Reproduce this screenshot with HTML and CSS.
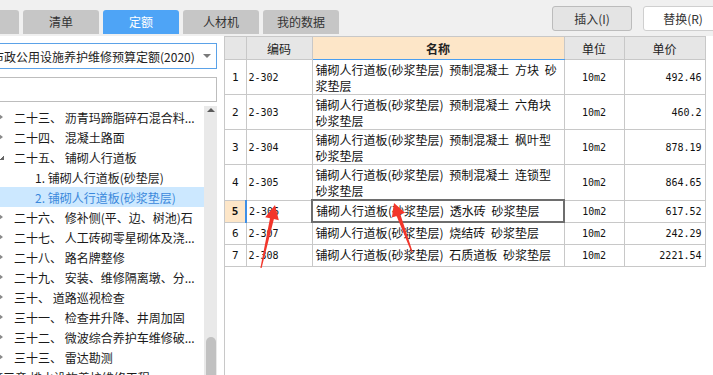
FILE: index.html
```html
<!DOCTYPE html>
<html>
<head>
    <meta charset="utf-8">
    <title>定额</title>
    <link rel="stylesheet" href="styles.css">
</head>
<body>
<div class="topbar">
    <div class="tabs">
        <div class="tab">工程</div>
        <div class="tab">清单</div>
        <div class="tab active">定额</div>
        <div class="tab">人材机</div>
        <div class="tab">我的数据</div>
    </div>
    <div class="actions">
        <button class="btn">插入(I)</button>
        <button class="btn btn-white">替换(R)</button>
    </div>
</div>
<div class="main">
    <div class="left">
        <div class="lib-select">
            <span>市政公用设施养护维修预算定额(2020)</span>
            <span class="caret"></span>
        </div>
        <div class="search"></div>
        <div class="tree-wrap">
            <ul class="tree">
                <li class="node"><span class="tw"></span>二十三、 沥青玛蹄脂碎石混合料...</li>
                <li class="node"><span class="tw"></span>二十四、 混凝土路面</li>
                <li class="node"><span class="tw open"></span>二十五、 铺砌人行道板</li>
                <li class="node child">1. 铺砌人行道板(砂垫层)</li>
                <li class="node child sel">2. 铺砌人行道板(砂浆垫层)</li>
                <li class="node"><span class="tw"></span>二十六、 修补侧(平、边、树池)石</li>
                <li class="node"><span class="tw"></span>二十七、 人工砖砌零星砌体及浇...</li>
                <li class="node"><span class="tw"></span>二十八、 路名牌整修</li>
                <li class="node"><span class="tw"></span>二十九、 安装、维修隔离墩、分...</li>
                <li class="node"><span class="tw"></span>三十、 道路巡视检查</li>
                <li class="node"><span class="tw"></span>三十一、 检查井升降、井周加固</li>
                <li class="node"><span class="tw"></span>三十二、 微波综合养护车维修破...</li>
                <li class="node"><span class="tw"></span>三十三、 雷达勘测</li>
                <li class="node chapter">第三章 排水设施养护维修工程</li>
            </ul>
            <div class="vscroll">
                <span class="up"></span>
                <span class="thumb"></span>
            </div>
        </div>
    </div>
    <div class="right">
        <table class="grid">
            <colgroup>
                <col class="c-rn">
                <col class="c-code">
                <col class="c-name">
                <col class="c-unit">
                <col class="c-price">
            </colgroup>
            <thead>
            <tr>
                <th class="rn"></th>
                <th>编码</th>
                <th class="name-h">名称</th>
                <th>单位</th>
                <th>单价</th>
            </tr>
            </thead>
            <tbody>
            <tr class="tall">
                <td class="rn">1</td>
                <td class="code">2-302</td>
                <td class="name"><div>铺砌人行道板(砂浆垫层) 预制混凝土 方块 砂浆垫层</div></td>
                <td class="unit">10m2</td>
                <td class="price">492.46</td>
            </tr>
            <tr class="tall">
                <td class="rn">2</td>
                <td class="code">2-303</td>
                <td class="name"><div>铺砌人行道板(砂浆垫层) 预制混凝土 六角块 砂浆垫层</div></td>
                <td class="unit">10m2</td>
                <td class="price">460.2</td>
            </tr>
            <tr class="tall">
                <td class="rn">3</td>
                <td class="code">2-304</td>
                <td class="name"><div>铺砌人行道板(砂浆垫层) 预制混凝土 枫叶型 砂浆垫层</div></td>
                <td class="unit">10m2</td>
                <td class="price">878.19</td>
            </tr>
            <tr class="tall">
                <td class="rn">4</td>
                <td class="code">2-305</td>
                <td class="name"><div>铺砌人行道板(砂浆垫层) 预制混凝土 连锁型 砂浆垫层</div></td>
                <td class="unit">10m2</td>
                <td class="price">864.65</td>
            </tr>
            <tr class="short cur">
                <td class="rn">5</td>
                <td class="code">2-306</td>
                <td class="name"><div>铺砌人行道板(砂浆垫层) 透水砖 砂浆垫层</div></td>
                <td class="unit">10m2</td>
                <td class="price">617.52</td>
            </tr>
            <tr class="short">
                <td class="rn">6</td>
                <td class="code">2-307</td>
                <td class="name"><div>铺砌人行道板(砂浆垫层) 烧结砖 砂浆垫层</div></td>
                <td class="unit">10m2</td>
                <td class="price">242.29</td>
            </tr>
            <tr class="short">
                <td class="rn">7</td>
                <td class="code">2-308</td>
                <td class="name"><div>铺砌人行道板(砂浆垫层) 石质道板 砂浆垫层</div></td>
                <td class="unit">10m2</td>
                <td class="price">2221.54</td>
            </tr>
            </tbody>
        </table>
    </div>
</div>

<!-- red marker arrows drawn on top of the screenshot -->
<svg class="marks" width="713" height="375" viewBox="0 0 713 375">
    <polygon points="275,205 278.8,220.2 273.9,219.1 261.6,268.1 260.4,267.9 270,218.3 265.2,217.2"/>
    <polygon points="394,203 405.1,212.8 400.4,214.5 412.6,251.8 411.4,252.2 396.6,215.9 391.9,217.6"/>
</svg>
</body>
</html>
```

FILE: styles.css
```css
* {
    box-sizing: border-box;
}

html, body {
    margin: 0;
    height: 375px;
    overflow: hidden;
}

body {
    position: relative;
    font-family: "Noto Sans CJK SC", "Noto Sans", sans-serif;
    font-size: 12px;
    color: #1a1a1a;
    background-color: #f0f0f0;
}

/* top tabs and buttons */
.topbar {
    display: flex;
    justify-content: space-between;
    height: 36px;
}

.tabs {
    display: flex;
    gap: 4px;
    margin-left: -57px;
    padding-top: 10px;
}

.tab {
    width: 76px;
    height: 24px;
    line-height: 24px;
    text-align: center;
    background-color: #c6c6c6;
    color: #333;
    border-radius: 3px 3px 0 0;
}

.tab.active {
    background-color: #4ea4f6;
    color: #fff;
}

.actions {
    display: flex;
    align-items: flex-start;
    gap: 11px;
    margin-top: 6px;
    margin-right: -10px;
}

.btn {
    width: 80px;
    height: 25px;
    padding: 0;
    font: inherit;
    color: #333;
    background-color: #e4e4e4;
    border: 1px solid #bcbcbc;
    border-radius: 3px;
}

.btn-white {
    background-color: #fff;
    border-color: #cfcfcf;
}

/* panels */
.main {
    display: flex;
    height: 339px;
}

.left {
    width: 224px;
    flex: none;
    display: flex;
    flex-direction: column;
    padding: 7px 7px 0 0;
    background-color: #fff;
    overflow: hidden;
}

.lib-select {
    display: flex;
    align-items: center;
    justify-content: space-between;
    height: 26px;
    margin-left: -20px;
    padding: 0 5px 0 11px;
    border: 1px solid #5ba2e8;
    white-space: nowrap;
    color: #222;
}

.caret {
    border-left: 4px solid transparent;
    border-right: 4px solid transparent;
    border-top: 4px solid #7a7a7a;
}

.search {
    height: 25px;
    margin: 8px 0 0 -20px;
    border: 1px solid #bdbdbd;
}

.tree-wrap {
    flex: 1;
    min-height: 0;
    display: flex;
    margin-top: 4px;
}

.tree {
    flex: 1;
    margin: 0;
    padding: 1px 0 0;
    list-style: none;
    overflow: hidden;
}

.node {
    display: flex;
    align-items: center;
    height: 20px;
    white-space: nowrap;
}

.tw {
    width: 0;
    height: 0;
    margin: 0 11px 0 -1px;
    border-top: 3px solid transparent;
    border-bottom: 3px solid transparent;
    border-left: 4px solid #8a8a8a;
}

.tw.open {
    width: 5px;
    height: 5px;
    margin-right: 10px;
    border: none;
    background: linear-gradient(135deg, transparent 50%, #666 50%);
}

.node.child {
    padding-left: 35px;
}

.node.sel {
    background-color: #cce8ff;
    color: #3a88dc;
}

.node.chapter {
    margin-left: -9px;
}

.vscroll {
    width: 13px;
    flex: none;
    display: flex;
    flex-direction: column;
    align-items: center;
    background-color: #e9e9e9;
}

.up {
    margin-top: 2px;
    border-left: 4px solid transparent;
    border-right: 4px solid transparent;
    border-bottom: 4px solid #5a5a5a;
}

.thumb {
    width: 10px;
    height: 38px;
    margin-top: auto;
    background-color: #c1c1c1;
    border-radius: 5px 5px 0 0;
}

.right {
    flex: 1;
    background-color: #fff;
    border-left: 1px solid #c8c8c8;
}

/* data grid */
.grid {
    border-collapse: collapse;
    table-layout: fixed;
    width: 480px;
}

.c-rn { width: 21px; }
.c-code { width: 66px; }
.c-name { width: 252px; }
.c-unit { width: 60px; }
.c-price { width: 81px; }

.grid th, .grid td {
    border: 1px solid #c8c8c8;
    padding: 0 3px;
}

.grid .rn {
    border-left: none;
    padding: 0;
    text-align: center;
}

.grid th {
    height: 23px;
    font-weight: normal;
    color: #222;
    background-color: #e6e6e6;
}

.grid th.name-h {
    font-weight: bold;
    background-color: #fde6c8;
    border-bottom: 1px solid #4a9eef;
}

.grid tr.tall td {
    height: 33px;
}

.grid tr.short td {
    height: 22px;
}

.grid td {
    vertical-align: middle;
    font-family: "DejaVu Sans Mono", monospace;
    font-size: 10px;
    color: #111;
}

.grid td.rn {
    font-size: 11px;
}

.grid td.code {
    padding-left: 2px;
}

.grid td.name {
    vertical-align: top;
    padding: 2px 5px 0 3px;
    font-family: "Noto Sans CJK SC", "Noto Sans", sans-serif;
    font-size: 12px;
    line-height: 16px;
    word-spacing: 3px;
}

.grid td.unit {
    text-align: center;
}

.grid td.price {
    text-align: right;
    padding-right: 3px;
}

.grid tr.cur td.rn {
    background-color: #fde6c8;
    font-weight: bold;
}

.grid tr.cur td.code {
    border-left: 2px solid #3d8fe6;
}

.grid tr.cur td.name {
    border: 2px solid #6e6e6e;
}

.marks {
    position: absolute;
    left: 0;
    top: 0;
    pointer-events: none;
    fill: #f2362b;
}
```
